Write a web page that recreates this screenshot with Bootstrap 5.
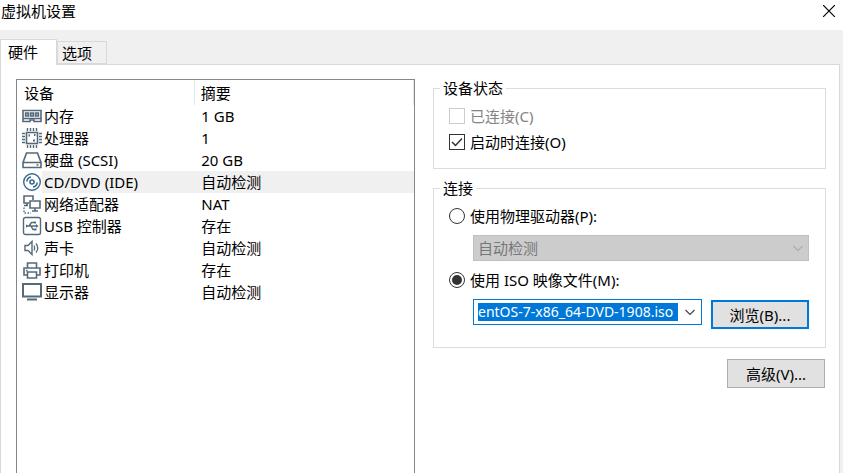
<!DOCTYPE html>
<html lang="zh-CN">
<head>
<meta charset="utf-8">
<meta name="viewport" content="width=device-width, initial-scale=1">
<title>虚拟机设置</title>
<link href="https://cdn.jsdelivr.net/npm/bootstrap@5.3.0/dist/css/bootstrap.min.css" rel="stylesheet">
<style>
body { font-family: "Noto Sans", "Noto Sans CJK SC", sans-serif; font-size: 15px; line-height: 22px; color: #000; background: #f0f0f0; }
.titlebar { height: 30px; padding-left: 1px; }
.titlebar h1 { font-size: 15px; line-height: 22px; font-weight: 400; }
.close-btn { width: 28px; height: 22px; }
.settings-tabs { padding-top: 9px; border: 0; }
.settings-tabs .nav-link { color: #000; border: 1px solid #d9d9d9; border-radius: 0; margin: 2px 0 0 0; padding: 0 14px 0 4px; height: 23px; background: #f0f0f0; line-height: 22px; }
.settings-tabs .nav-link.active { margin: 0 0 -1px 0; height: 26px; padding: 0 18px 2px 7px; background: #fff; color: #000; border-color: #d9d9d9; border-bottom: 0; position: relative; }
.page-panel { border: 1px solid #d9d9d9; border-bottom: 0; margin-right: 3px; padding: 14px 13px 0 15px; display: grid; grid-template-columns: 400fr 392fr; column-gap: 18px; }
.device-list { border: 1px solid #828790; border-bottom: 0; }
.device-table { table-layout: fixed; line-height: 22px; color: #000; }
.device-table col:first-child { width: 44.7%; }
.device-table th { height: 25px; font-weight: 400; padding: 0 7px; }
.device-table th + th { border-left: 1px solid #e5e5e5; border-right: 1px solid #e5e5e5; padding-left: 6px; }
.device-table td { height: 22px; padding: 0 7px; }
.device-table .picked td { background: #f0f0f0; }
.device-table .device-name { padding-left: 27px; position: relative; }
.device-table .picked .device-name { background: linear-gradient(to right, #fff 25px, #f0f0f0 25px); }
.device-icon { position: absolute; left: 5px; top: 1px; width: 20px; height: 20px; fill: none; stroke: #546a79; stroke-width: 1.6; }
.disc-icon { stroke: #35698c; }
.group-box { border: 1px solid #dcdcdc; padding: 0 16px 13px 15px; }
.group-box.source-box { margin-top: 10px; padding-bottom: 18px; }
.group-title { float: none; width: auto; font-size: 15px; line-height: 18px; margin: 0 0 6px -9px; padding: 0 3px; }
.option-line { display: flex; align-items: center; gap: 5px; height: 26px; min-height: 0; margin: 0; padding: 0; }
.option-line .form-check-input { float: none; margin: 0; width: 16px; height: 16px; border: 1px solid #333; border-radius: 0; flex: none; background-color: #fff; box-shadow: none; }
.option-line .form-check-input[type=radio] { border-radius: 50%; }
.option-line .form-check-input:disabled { border-color: #ccc; opacity: 1; }
.option-line .form-check-input:disabled ~ label { color: #838383; opacity: 1; }
.option-line .form-check-input[type=checkbox]:checked { background-size: 14px; background-image: url("data:image/svg+xml,%3Csvg xmlns='http://www.w3.org/2000/svg' viewBox='0 0 14 14'%3E%3Cpath d='M2 7l3.5 3.5L12 3.5' fill='none' stroke='%23333' stroke-width='1.5'/%3E%3C/svg%3E"); }
.option-line .form-check-input[type=radio]:checked { background-size: 14px; background-image: url("data:image/svg+xml,%3Csvg xmlns='http://www.w3.org/2000/svg' viewBox='0 0 14 14'%3E%3Ccircle cx='7' cy='7' r='5' fill='%23333'/%3E%3C/svg%3E"); }
.sub-field { margin: 6px 0 0 24px; }
.sub-field + .option-line { margin-top: 6px; }
.iso-row { gap: 9px; }
.drive-select { height: 26px; border: 1px solid #bfbfbf; border-radius: 0; padding: 0 24px 0 4px; font-size: 15px; line-height: 24px; background-position: right 4px center; background-size: 12px; background-image: url("data:image/svg+xml,%3Csvg xmlns='http://www.w3.org/2000/svg' viewBox='0 0 12 12'%3E%3Cpath d='M1.5 4L6 8.5L10.500 4' fill='none' stroke='%23999'/%3E%3C/svg%3E"); }
.drive-select:disabled { background-color: #ccc; color: #777; opacity: 1; }
.iso-box { height: 26px; border: 1px solid #0078d7; background: #fff; }
.iso-box input { min-width: 0; height: 18px; padding: 0; margin: 0 1px 0 4px; border: 0; background: #0078d7; color: #fff; font-size: 14px; line-height: 18px; outline: 0; }
.iso-box button { width: 22px; }
.push-btn { color: #000; background: #e1e1e1; border: 1px solid #adadad; border-radius: 0; width: 98px; height: 29px; padding: 0; font-size: 15px; line-height: 24px; }
.push-btn.is-default { border: 2px solid #0078d7; margin-top: 1px; }
.advanced-row { padding: 11px 1px 0 0; }
</style>
</head>
<body class="vh-100 overflow-hidden d-flex flex-column">
<header class="titlebar bg-white d-flex justify-content-between flex-shrink-0">
  <h1 class="m-0">虚拟机设置</h1>
  <button class="close-btn btn p-0 border-0 rounded-0 d-flex align-items-center justify-content-center" type="button" aria-label="关闭">
    <svg width="12" height="12" viewBox="0 0 12 12" fill="none" stroke="#000" stroke-width="1.2"><path d="M0 0L12 12M12 0L0 12"/></svg>
  </button>
</header>
<ul class="nav nav-tabs settings-tabs flex-shrink-0" role="tablist">
  <li class="nav-item" role="presentation"><button class="nav-link active" type="button" role="tab" aria-selected="true">硬件</button></li>
  <li class="nav-item" role="presentation"><button class="nav-link" type="button" role="tab" aria-selected="false">选项</button></li>
</ul>
<main class="page-panel bg-white flex-grow-1">
  <section class="device-list">
    <table class="device-table w-100">
      <colgroup><col><col></colgroup>
      <thead><tr><th scope="col">设备</th><th scope="col">摘要</th></tr></thead>
      <tbody>
        <tr><td class="device-name"><svg class="device-icon" viewBox="0 0 20 20"><path d="M1 4.500H19V15.500H12V14H8V15.500H1Z"/><path d="M3.500 7H6.500V10H3.500ZM8.500 7H11.500V10H8.500ZM13.500 7H16.500V10H13.500Z" fill="#a5b2bc" stroke-width="1.400"/><path d="M1 12.500H19"/></svg>内存</td><td>1 GB</td></tr>
        <tr><td class="device-name"><svg class="device-icon" viewBox="0 0 20 20"><rect x="4.500" y="4.500" width="11" height="11"/><path d="M5.500 0V3M8.500 0V3M11.500 0V3M14.500 0V3M5.500 17V20M8.500 17V20M11.500 17V20M14.500 17V20M0 5.500H3M0 8.500H3M0 11.500H3M0 14.500H3M17 5.500H20M17 8.500H20M17 11.500H20M17 14.500H20" stroke-width="1.400"/><path d="M6.500 7.500H8M12 7H13.500M11 12.500H13" stroke-width="1.800"/></svg>处理器</td><td>1</td></tr>
        <tr><td class="device-name"><svg class="device-icon" viewBox="0 0 20 20"><path d="M4.500 3H15.500L19 12.500V17.500H1V12.500ZM1 12.500H19M14.500 15H16.500"/></svg>硬盘 (SCSI)</td><td>20 GB</td></tr>
        <tr class="picked"><td class="device-name"><svg class="device-icon disc-icon" viewBox="0 0 20 20"><circle cx="10" cy="10" r="8.300" stroke-width="1.400"/><circle cx="10" cy="10" r="2"/><path d="M4.800 9.500A5 5 0 0 1 9 5M15.200 10.500A5 5 0 0 1 11 15"/></svg>CD/DVD (IDE)</td><td>自动检测</td></tr>
        <tr><td class="device-name"><svg class="device-icon" viewBox="0 0 20 20"><path d="M7 9H2V2H11V6M8 7H18V14H8ZM13 14V17M10 17H16M5 9V11.500M2 11.500H6"/><path d="M2 13.500V19H9" stroke-width="1.400" stroke-dasharray="1.500 1.500"/></svg>网络适配器</td><td>NAT</td></tr>
        <tr><td class="device-name"><svg class="device-icon" viewBox="0 0 20 20"><rect x="1.500" y="1.500" width="17" height="17" rx="2" stroke-width="1.400"/><path d="M5 10H15M7 10L9.500 6.500H12M9 10L11 13.500H13" stroke-width="1.400"/><path d="M4 8.300V11.700L6 10ZM12 5.500H14V7.500H12ZM12.500 12.500H14.500V14.500H12.500ZM14 8L16.500 10L14 12Z" fill="#546a79" stroke="none"/></svg>USB 控制器</td><td>存在</td></tr>
        <tr><td class="device-name"><svg class="device-icon" viewBox="0 0 20 20"><path d="M3 7.500H6L10 3.500V16.500L6 12.500H3Z" stroke-width="1.400"/><path d="M12 7.500Q13.500 10 12 12.500M14 5.500Q17.500 10 14 14.500" stroke-width="1.300"/></svg>声卡</td><td>自动检测</td></tr>
        <tr><td class="device-name"><svg class="device-icon" viewBox="0 0 20 20"><path d="M5.500 8V3H14.500V8M5.500 15H2V8H18V15H14.500M5.500 12H14.500V18H5.500ZM4 10.500H5.500"/></svg>打印机</td><td>存在</td></tr>
        <tr><td class="device-name"><svg class="device-icon" viewBox="0 0 20 20"><path d="M1 2H19V14.500H1Z" stroke-width="2"/><path d="M5 17.500H15" stroke-width="2"/></svg>显示器</td><td>自动检测</td></tr>
      </tbody>
    </table>
  </section>
  <section>
    <fieldset class="group-box">
      <legend class="group-title">设备状态</legend>
      <div class="form-check option-line"><input class="form-check-input" type="checkbox" id="connected" disabled><label for="connected">已连接(C)</label></div>
      <div class="form-check option-line"><input class="form-check-input" type="checkbox" id="onstart" checked><label for="onstart">启动时连接(O)</label></div>
    </fieldset>
    <fieldset class="group-box source-box">
      <legend class="group-title">连接</legend>
      <div class="form-check option-line"><input class="form-check-input" type="radio" name="source" id="physical"><label for="physical">使用物理驱动器(P):</label></div>
      <div class="sub-field"><select class="form-select drive-select" aria-label="物理驱动器" disabled><option>自动检测</option></select></div>
      <div class="form-check option-line"><input class="form-check-input" type="radio" name="source" id="iso" checked><label for="iso">使用 ISO 映像文件(M):</label></div>
      <div class="sub-field iso-row d-flex align-items-start">
        <div class="iso-box d-flex align-items-center flex-grow-1">
          <input class="flex-grow-1" type="text" aria-label="ISO 映像文件" value="entOS-7-x86_64-DVD-1908.iso">
          <button class="btn p-0 border-0 d-flex align-items-center justify-content-center" type="button" aria-label="展开列表"><svg width="12" height="12" viewBox="0 0 12 12"><path d="M1.500 4L6 8.500L10.500 4" fill="none" stroke="#444" stroke-width="1.200"/></svg></button>
        </div>
        <button class="btn push-btn is-default" type="button">浏览(B)...</button>
      </div>
    </fieldset>
    <div class="advanced-row text-end"><button class="btn push-btn" type="button">高级(V)...</button></div>
  </section>
</main>
<script src="https://cdn.jsdelivr.net/npm/bootstrap@5.3.0/dist/js/bootstrap.bundle.min.js"></script>
</body>
</html>
